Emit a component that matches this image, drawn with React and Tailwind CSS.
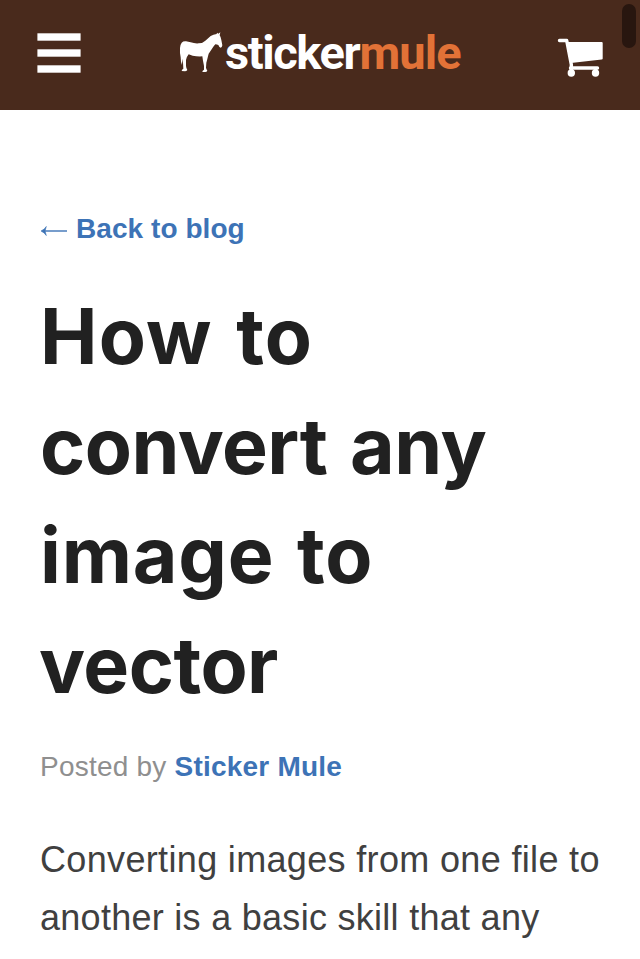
function MenuIcon() {
  return (
    <svg width="44" height="40" viewBox="0 0 44 40" fill="#fff">
      <rect x="0.4" y="0.3" width="43.2" height="7.4" />
      <rect x="0.4" y="16.3" width="43.2" height="7.4" />
      <rect x="0.4" y="32.3" width="43.2" height="7.4" />
    </svg>
  );
}

function Logo() {
  return (
    <span className="flex items-start">
      <svg width="47" height="74" viewBox="24 -12 141 222">
        <path
          fill="#fff"
          d="M35 68Q40 63 48 64L62 67Q74 71 86 70Q98 70 106 62L122 48Q130 43 140 42L141 38L145 41L151 37L149 46Q153 52 154 60L157 76Q156 83 152 83Q148 83 145 75Q141 73 136 73Q131 78 124 89L116 101Q114 108 112 117L109 128L108 143Q109 148 112 152Q110 156 106 156L97 156Q97 152 102 149L102 138L99 122L97 109Q82 110 68 107L56 103Q50 110 48 120L48 138Q49 146 52 150Q49 154 45 154L35 153Q35 149 40 146L39 128L37 116L36 135Q32 128 32 112Q29 98 30 84Q31 73 35 68Z"
        />
      </svg>
      <span className="mt-[7px] font-['Roboto',sans-serif] text-[47px] leading-[60px] font-bold tracking-[-1.400px] whitespace-nowrap text-white">
        sticker<span className="tracking-[-0.900px] text-[#e27237]">mule</span>
      </span>
    </span>
  );
}

function CartIcon() {
  return (
    <svg width="46" height="40" viewBox="557 38 46 40" fill="#fff">
      <path
        d="M559.500 40.500h7.200l4.700 24.500-.4 3.300M570.500 68h27"
        fill="none"
        stroke="#fff"
        strokeWidth="3.400"
        strokeLinecap="round"
        strokeLinejoin="round"
      />
      <path d="M567.500 42h34.200q1 0 1 1v15.500q0 .8-1 1L571 63z" />
      <circle cx="571.300" cy="73" r="3.700" />
      <circle cx="595.500" cy="73" r="3.700" />
      <path d="M569.500 67h3.500v4h-3.500zM593.800 67h3.500v4h-3.500z" />
    </svg>
  );
}

export default function App() {
  return (
    <div className="relative h-[959px] w-[640px] overflow-hidden bg-white font-['Liberation_Sans',sans-serif]">
      <header className="flex h-[110px] items-start bg-[#492a1c] px-[37px]">
        <button className="mt-[33px]" aria-label="Menu">
          <MenuIcon />
        </button>
        <a className="mt-4 ml-[97px]" aria-label="Sticker Mule">
          <Logo />
        </a>
        <a className="mt-[38px] ml-auto" aria-label="Cart">
          <CartIcon />
        </a>
      </header>
      <main className="px-10">
        <a className="mt-[99px] flex h-10 items-center text-[28px] font-bold text-[#3d73b6]">
          <svg width="28" height="14" viewBox="0 0 28 14" className="mt-1 mr-2" fill="none" stroke="#3d73b6" strokeWidth="1.400">
            <path d="M3 7h24" />
            <path d="M1 7Q4.500 5.500 6.300 2.500L5 7l1.300 4.500Q4.500 8.500 1 7z" fill="#3d73b6" strokeWidth="0.600" />
          </svg>
          <span className="tracking-[0.060px]">Back to blog</span>
        </a>
        <h1 className="mt-[33px] flex flex-col font-['Inter',sans-serif] text-[77px] leading-[109.500px] font-bold whitespace-nowrap text-[#212121]">
          <span className="tracking-[1.200px] [word-spacing:4px]">How to</span>
          <span className="tracking-[-0.500px] [word-spacing:5px]">convert any</span>
          <span className="tracking-[0.800px] [word-spacing:3.500px]">image to</span>
          <span className="-ml-px tracking-[-0.500px]">vector</span>
        </h1>
        <p className="mt-[27px] text-[28px] leading-10 tracking-[0.220px] text-[#8f8f8f]">
          Posted by <a className="font-bold text-[#3d73b6]">Sticker Mule</a>
        </p>
        <p className="mt-[44px] text-[36px] leading-[58px] tracking-[0.340px] whitespace-nowrap text-[#404040]">
          Converting images from one file to
          <br />
          <span className="tracking-[0.280px]">another is a basic skill that any</span>
        </p>
      </main>
      <div className="absolute top-1 right-1 h-11 w-[14px] rounded-full bg-[#28160f]" />
    </div>
  );
}
